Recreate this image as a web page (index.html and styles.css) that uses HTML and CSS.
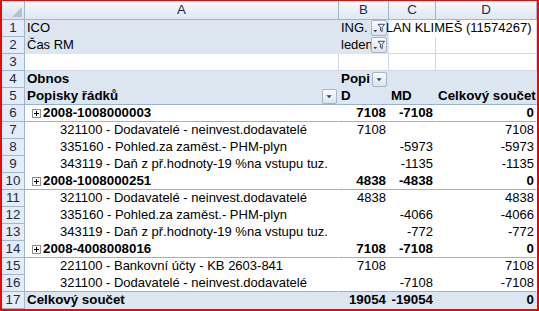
FILE: index.html
```html
<!DOCTYPE html>
<html lang="cs">
<head>
<meta charset="utf-8">
<link rel="stylesheet" href="styles.css">
</head>
<body>
<div class="frame">
  <div class="sheet">
    <!-- header -->
    <div class="corner"><span class="tri"></span></div>
    <div class="colhead">A</div>
    <div class="colhead">B</div>
    <div class="colhead">C</div>
    <div class="colhead">D</div>

    <!-- row 1 -->
    <div class="rh">1</div>
    <div class="c fill nob">ICO</div>
    <div class="c fill nob over"><span class="ovtext">ING. MILAN KLIMEŠ (11574267)</span><span class="btn filt"><svg width="15" height="15" viewBox="0 0 15 15"><path d="M1.5 9h4l-2 2.5z" fill="#2b3d5b"/><path d="M6.5 3h7l-2.6 3.2v4.6l-1.8-1.2v-3.4z" fill="#fff" stroke="#2b3d5b" stroke-width="1"/></svg></span></div>
    <div class="c white nob nor"></div>
    <div class="c white nob"></div>

    <!-- row 2 -->
    <div class="rh">2</div>
    <div class="c fill">Čas RM</div>
    <div class="c fill">leden<span class="btn filt"><svg width="15" height="15" viewBox="0 0 15 15"><path d="M1.5 9h4l-2 2.5z" fill="#2b3d5b"/><path d="M6.5 3h7l-2.6 3.2v4.6l-1.8-1.2v-3.4z" fill="#fff" stroke="#2b3d5b" stroke-width="1"/></svg></span></div>
    <div class="c white"></div>
    <div class="c white"></div>

    <!-- row 3 -->
    <div class="rh">3</div>
    <div class="c white"></div>
    <div class="c white"></div>
    <div class="c white"></div>
    <div class="c white"></div>

    <!-- row 4 -->
    <div class="rh">4</div>
    <div class="c fill nob nor b">Obnos</div>
    <div class="c fill nob nor b">Popi<span class="btn dd"><svg width="15" height="15" viewBox="0 0 15 15"><path d="M4 6h6l-3 3.5z" fill="#2b3d6b"/></svg></span></div>
    <div class="c fill nob nor"></div>
    <div class="c fill nob"></div>

    <!-- row 5 -->
    <div class="rh">5</div>
    <div class="c fill hl nor b">Popisky řádků<span class="btn dd"><svg width="15" height="15" viewBox="0 0 15 15"><path d="M4 6h6l-3 3.5z" fill="#2b3d6b"/></svg></span></div>
    <div class="c fill hl nor b">D</div>
    <div class="c fill hl nor b">MD</div>
    <div class="c fill hl b">Celkový součet</div>

    <!-- row 6 -->
    <div class="rh">6</div>
    <div class="c grp b"><span class="plus"></span>2008-1008000003</div>
    <div class="c grp b num">7108</div>
    <div class="c grp b num">-7108</div>
    <div class="c grp b num">0</div>

    <div class="rh">7</div>
    <div class="c item">321100 - Dodavatelé - neinvest.dodavatelé</div>
    <div class="c num">7108</div>
    <div class="c num"></div>
    <div class="c num">7108</div>

    <div class="rh">8</div>
    <div class="c item">335160 - Pohled.za zaměst.- PHM-plyn</div>
    <div class="c num"></div>
    <div class="c num">-5973</div>
    <div class="c num">-5973</div>

    <div class="rh">9</div>
    <div class="c item">343119 - Daň z př.hodnoty-19 %na vstupu tuz.</div>
    <div class="c num"></div>
    <div class="c num">-1135</div>
    <div class="c num">-1135</div>

    <!-- row 10 -->
    <div class="rh">10</div>
    <div class="c grp b"><span class="plus"></span>2008-1008000251</div>
    <div class="c grp b num">4838</div>
    <div class="c grp b num">-4838</div>
    <div class="c grp b num">0</div>

    <div class="rh">11</div>
    <div class="c item">321100 - Dodavatelé - neinvest.dodavatelé</div>
    <div class="c num">4838</div>
    <div class="c num"></div>
    <div class="c num">4838</div>

    <div class="rh">12</div>
    <div class="c item">335160 - Pohled.za zaměst.- PHM-plyn</div>
    <div class="c num"></div>
    <div class="c num">-4066</div>
    <div class="c num">-4066</div>

    <div class="rh">13</div>
    <div class="c item">343119 - Daň z př.hodnoty-19 %na vstupu tuz.</div>
    <div class="c num"></div>
    <div class="c num">-772</div>
    <div class="c num">-772</div>

    <!-- row 14 -->
    <div class="rh">14</div>
    <div class="c grp b"><span class="plus"></span>2008-4008008016</div>
    <div class="c grp b num">7108</div>
    <div class="c grp b num">-7108</div>
    <div class="c grp b num">0</div>

    <div class="rh">15</div>
    <div class="c item">221100 - Bankovní účty - KB 2603-841</div>
    <div class="c num">7108</div>
    <div class="c num"></div>
    <div class="c num">7108</div>

    <div class="rh">16</div>
    <div class="c item last">321100 - Dodavatelé - neinvest.dodavatelé</div>
    <div class="c num last"></div>
    <div class="c num last">-7108</div>
    <div class="c num last">-7108</div>

    <!-- row 17 -->
    <div class="rh">17</div>
    <div class="c fill tot b">Celkový součet</div>
    <div class="c fill tot b num">19054</div>
    <div class="c fill tot b num">-19054</div>
    <div class="c fill tot b num">0</div>
  </div>
</div>
</body>
</html>
```

FILE: styles.css
```css
* { box-sizing: border-box; }
html, body { margin: 0; padding: 0; background: #fff; }
body {
  font-family: "Liberation Sans", Arial, sans-serif;
  font-size: 13px;
  color: #000;
}
.frame {
  width: 539px;
  height: 311px;
  border-top: 1px solid #f00;
  border-left: 2px solid #f00;
  border-right: 2px solid #f00;
  border-bottom: 2px solid #f00;
  overflow: hidden;
}
.sheet {
  display: grid;
  grid-template-columns: 23px 314px 50px 47px 101px;
  grid-template-rows: 19px repeat(17, 17px);
}
.corner {
  position: relative;
  background: linear-gradient(#f3f6fb, #dae3ef);
  border-right: 1px solid #9eb6ce;
  border-bottom: 1px solid #9eb6ce;
}
.tri {
  position: absolute;
  right: 2px;
  bottom: 2px;
  width: 0;
  height: 0;
  border-left: 10px solid transparent;
  border-bottom: 10px solid #b6c2d2;
}
.colhead {
  background: linear-gradient(#f8fafd, #dfe7f2);
  border-right: 1px solid #9eb6ce;
  border-bottom: 1px solid #9eb6ce;
  text-align: center;
  line-height: 18px;
  font-size: 13.33px;
  color: #1b2b45;
}
.rh {
  background: #e4ecf7;
  border-right: 1px solid #9eb6ce;
  border-bottom: 1px solid #9eb6ce;
  text-align: center;
  line-height: 16px;
  font-size: 13.33px;
  color: #1b2b45;
}
.c {
  position: relative;
  white-space: nowrap;
  line-height: 16px;
  padding: 0 2px 0 2px;
  border-right: 1px solid transparent;
  border-bottom: 1px solid transparent;
  background: #fff;
}
.white {
  border-right-color: #d0d7e5;
  border-bottom-color: #d0d7e5;
}
.fill { background: #dce6f1; border-right-color: #dce6f1; border-bottom-color: #dce6f1; }
.hl { border-bottom-color: #95b3d7; }
.b { font-weight: bold; font-size: 13.33px; }
.num { text-align: right; }
.over { z-index: 2; overflow: visible; }
.ovtext { position: relative; }
.grp { border-bottom-color: #95b3d7; }
.item { padding-left: 35px; }
.last { border-bottom-color: #95b3d7; }
.tot { border-bottom-color: #dce6f1; }
.white.nob { border-bottom-color: #fff; }
.white.nor { border-right-color: #fff; }

.btn {
  position: absolute;
  right: 1px;
  top: 0;
  width: 16px;
  height: 16px;
  border: 1px solid #a9b4c4;
  border-radius: 2px;
  background: linear-gradient(#fafbfd, #dce3ee);
  display: flex;
  align-items: center;
  justify-content: center;
  z-index: 3;
}
.btn svg { display: block; }
.dd { top: 1px; width: 15px; height: 15px; }

.plus {
  display: inline-block;
  width: 9px;
  height: 9px;
  margin: 0 2px 0 5px;
  border: 1px solid #8e8f8f;
  background:
    linear-gradient(#000, #000) center / 5px 1px no-repeat,
    linear-gradient(#000, #000) center / 1px 5px no-repeat,
    #fff;
  vertical-align: -1px;
}
```
